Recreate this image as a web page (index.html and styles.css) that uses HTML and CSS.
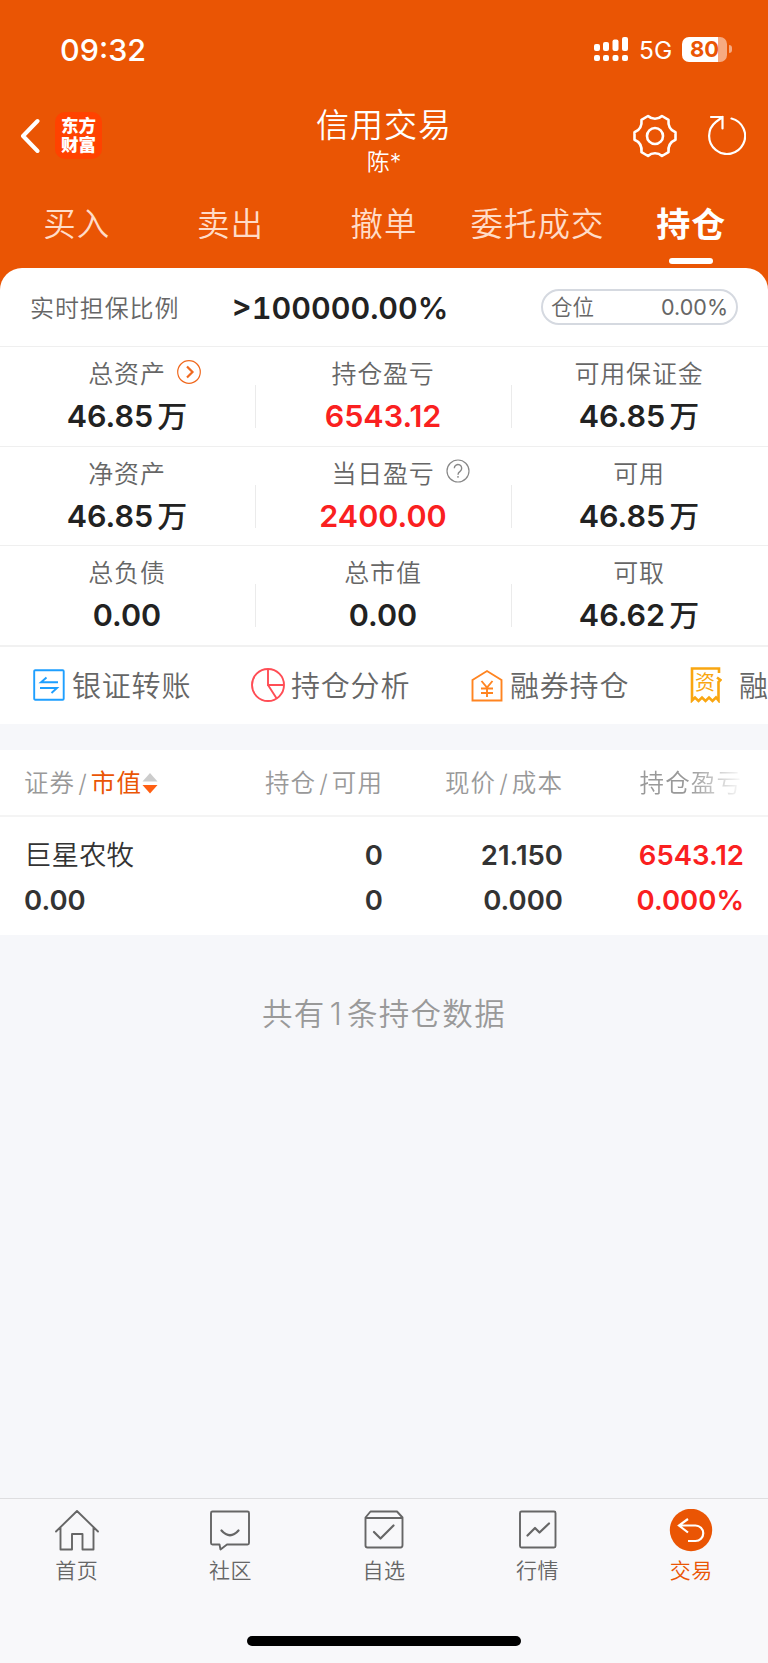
FILE: index.html
```
<!DOCTYPE html>
<html lang="zh-CN">
<head>
  <meta charset="UTF-8" />
  <meta name="viewport" content="width=device-width, initial-scale=1.0"/>
  <title>信用交易</title>
  <link rel="stylesheet" href="styles.css">
</head>
<body>

  <!-- 顶部 -->
  <header class="header">
    <div class="status-bar">
      <span class="time">09:32</span>
      <svg class="signal" width="35" height="26" viewBox="0 0 35 26" fill="#fff">
        <rect x="0" y="8" width="6" height="7" rx="2"/>
        <rect x="9" y="6" width="6" height="9" rx="2"/>
        <rect x="18.500" y="3.500" width="6" height="11.500" rx="2"/>
        <rect x="28" y="1" width="6" height="14" rx="2"/>
        <rect x="0" y="19" width="6" height="6" rx="2"/>
        <rect x="9" y="19" width="6" height="6" rx="2"/>
        <rect x="18.500" y="19" width="6" height="6" rx="2"/>
        <rect x="28" y="19" width="6" height="6" rx="2"/>
      </svg>
      <span class="network">5G</span>
      <span class="battery">80</span>
      <span class="battery-cap"></span>
    </div>

    <div class="nav-bar">
      <div class="nav-left">
        <svg width="20" height="36" viewBox="0 0 20 36" fill="none" stroke="#fff" stroke-width="4" stroke-linecap="round" stroke-linejoin="round">
          <path d="M17.500 3 3 18l14.500 15"/>
        </svg>
        <div class="logo">东方<br>财富</div>
      </div>
      <div class="nav-title">
        <h1>信用交易</h1>
        <p>陈*</p>
      </div>
      <div class="nav-right">
        <svg width="44" height="44" viewBox="0 0 44 44" fill="none" stroke="#fff" stroke-width="2.600" stroke-linejoin="round">
          <path d="M15 2Q18 4.800 22 4.800T29 2L35.500 5.800C34.800 12.500 37 16 42.500 18.300V25.700C37 28 34.800 31.500 35.500 38.200L29 42Q26 39.200 22 39.200T15 42L8.500 38.200C9.200 31.500 7 28 1.500 25.700V18.300C7 16 9.200 12.500 8.500 5.800Z"/>
          <circle cx="22" cy="22" r="8"/>
        </svg>
        <svg width="38" height="40" viewBox="0 0 38 40" fill="none" stroke="#fff" stroke-width="2.200" stroke-linecap="round">
          <path d="M23.500 3.500A18 18 0 1 1 8 6.800L14.500 2M3 2H14.500V13.500"/>
        </svg>
      </div>
    </div>

    <nav class="tabs">
      <span>买入</span>
      <span>卖出</span>
      <span>撤单</span>
      <span>委托成交</span>
      <span class="active">持仓</span>
    </nav>
  </header>

  <!-- 资产 -->
  <section class="assets">
    <div class="ratio">
      <span class="ratio-label">实时担保比例</span>
      <span class="ratio-value">&gt;100000.00%</span>
      <div class="position"><span>仓位</span><span class="position-value">0.00%</span></div>
    </div>

    <div class="asset-row">
      <div class="asset">
        <p class="label">总资产
          <svg class="mark" width="24" height="24" viewBox="0 0 24 24" fill="none" stroke="#f0691f">
            <circle cx="12" cy="12" r="11.300" stroke-width="1.200"/>
            <path d="M10 6.500 15.500 12 10 17.500" stroke-width="2.200"/>
          </svg>
        </p>
        <p class="value">46.85<i>万</i></p>
      </div>
      <div class="asset">
        <p class="label">持仓盈亏</p>
        <p class="value red">6543.12</p>
      </div>
      <div class="asset">
        <p class="label">可用保证金</p>
        <p class="value">46.85<i>万</i></p>
      </div>
    </div>

    <div class="asset-row">
      <div class="asset">
        <p class="label">净资产</p>
        <p class="value">46.85<i>万</i></p>
      </div>
      <div class="asset">
        <p class="label">当日盈亏
          <svg class="mark" width="24" height="24" viewBox="0 0 24 24" fill="none" stroke="#888" stroke-width="1.200">
            <circle cx="12" cy="12" r="11"/>
            <path d="M8.300 9.300a3.700 3.700 0 1 1 5.800 3c-1.400 1-2.100 1.600-2.100 3.400M12 17v1.700" stroke-width="1.400"/>
          </svg>
        </p>
        <p class="value red">2400.00</p>
      </div>
      <div class="asset">
        <p class="label">可用</p>
        <p class="value">46.85<i>万</i></p>
      </div>
    </div>

    <div class="asset-row">
      <div class="asset">
        <p class="label">总负债</p>
        <p class="value">0.00</p>
      </div>
      <div class="asset">
        <p class="label">总市值</p>
        <p class="value">0.00</p>
      </div>
      <div class="asset">
        <p class="label">可取</p>
        <p class="value">46.62<i>万</i></p>
      </div>
    </div>

    <!-- 快捷入口 -->
    <div class="shortcuts">
      <div class="shortcut">
        <svg width="32" height="32" viewBox="0 0 32 32" fill="none" stroke="#1e9fff" stroke-width="1.900">
          <rect x="1.200" y="1.200" width="29.500" height="29.500" rx="1"/>
          <path d="M13.500 8.500 8 13.300H25M7 19H24L18.500 24"/>
        </svg>
        <span>银证转账</span>
      </div>
      <div class="shortcut analysis">
        <svg width="34" height="34" viewBox="0 0 34 34" fill="none" stroke="#ff4d55" stroke-width="1.900">
          <circle cx="17" cy="17" r="16"/>
          <path d="M17 1V17H33M17 17l8.500 13.200"/>
        </svg>
        <span>持仓分析</span>
      </div>
      <div class="shortcut">
        <svg width="32" height="34" viewBox="0 0 32 34" fill="none" stroke="#ff8420" stroke-width="1.900">
          <path d="M1.500 12 16 3 30.500 12V32.500H1.500Z"/>
          <path d="M10.500 13 16 19.500 21.500 13M16 19.500V29M10 20.500H22M10 25H22"/>
        </svg>
        <span>融券持仓</span>
      </div>
      <div class="shortcut">
        <div class="bill">
          <svg width="32" height="36" viewBox="0 0 32 36" fill="none" stroke="#f9a611" stroke-width="2.600">
            <path d="M29 6V1.500H2V33.500L5 30.500 8.500 34 12 30.500 15.500 34 19 30.500 22.500 34 26 30.500 28.500 33.500V15L30.500 13 27 10.500"/>
          </svg>
          <span>资</span>
        </div>
        <span>融</span>
      </div>
    </div>
  </section>

  <!-- 持仓列表 -->
  <section class="holdings">
    <div class="row head">
      <div>证券<b>/</b><em>市值</em><svg class="sort" width="16" height="22" viewBox="0 0 16 22">
        <path d="M0.500 9.500 8 1l7.500 8.500Z" fill="#ccc"/>
        <path d="M0.500 13 8 21.500 15.500 13Z" fill="#ff5f12"/>
      </svg></div>
      <div>持仓<b>/</b>可用</div>
      <div>现价<b>/</b>成本</div>
      <div class="fade">持仓盈亏</div>
    </div>
    <div class="row stock">
      <div><span class="name">巨星农牧</span><span>0.00</span></div>
      <div><span>0</span><span>0</span></div>
      <div><span>21.150</span><span>0.000</span></div>
      <div class="red"><span>6543.12</span><span>0.000%</span></div>
    </div>
  </section>

  <p class="total">共有<span>1</span>条持仓数据</p>

  <!-- 底部导航 -->
  <footer class="tab-bar">
    <div class="tab-items">
      <div class="tab-item">
        <svg width="44" height="44" viewBox="0 0 44 44" fill="none" stroke="#666" stroke-width="1.900" stroke-linejoin="round" stroke-linecap="round">
          <path d="M1 22.500 22 2 43 22.500M5.500 18.500V40.500H17V25H27.500V40.500H38.500V18.500"/>
        </svg>
        <span>首页</span>
      </div>
      <div class="tab-item">
        <svg width="44" height="44" viewBox="0 0 44 44" fill="none" stroke="#666" stroke-width="1.900" stroke-linejoin="round" stroke-linecap="round">
          <path d="M4.500 2.500H39.500Q41 2.500 41 4V34Q41 35.500 39.500 35.500H19L12.500 40.500 11.500 35.500H4.500Q3 35.500 3 34V4Q3 2.500 4.500 2.500Z"/>
          <path d="M13.500 21.500Q22 31 30.500 21.500" stroke-width="2.300"/>
        </svg>
        <span>社区</span>
      </div>
      <div class="tab-item">
        <svg width="44" height="44" viewBox="0 0 44 44" fill="none" stroke="#666" stroke-width="1.900" stroke-linejoin="round" stroke-linecap="round">
          <path d="M3.500 8.500 8.500 2.500H35L40.500 8.500V36Q40.500 38.500 38.500 38.500H5.500Q3.500 38.500 3.500 36.500ZM4 9H40"/>
          <path d="M12 23 18.500 29.500 31.500 16.500" stroke-width="2.200"/>
        </svg>
        <span>自选</span>
      </div>
      <div class="tab-item">
        <svg width="44" height="44" viewBox="0 0 44 44" fill="none" stroke="#666" stroke-width="1.900" stroke-linejoin="round" stroke-linecap="round">
          <rect x="4" y="2.500" width="35.500" height="36" rx="1.500"/>
          <path d="M11.500 26.500 19 19 23.500 23.500 33 14.500" stroke-width="2.200"/>
        </svg>
        <span>行情</span>
      </div>
      <div class="tab-item active">
        <svg width="44" height="44" viewBox="0 0 44 44" fill="none" stroke="#fff" stroke-width="2.200">
          <circle cx="22" cy="21" r="21.200" fill="#ea5504" stroke="none"/>
          <path d="M19 10 10 16.500 19 23.500M10.500 16.500H26.500A7.500 7.500 0 0 1 26.500 32H19"/>
        </svg>
        <span>交易</span>
      </div>
    </div>
    <div class="home-bar"></div>
  </footer>

</body>
</html>
```
FILE: styles.css
```
* {
  box-sizing: border-box;
}

body {
  margin: 0;
  min-height: 1663px;
  display: flex;
  flex-direction: column;
  font-family: Inter, "Noto Sans CJK SC", sans-serif;
  font-weight: 350;
  color: #666;
  background: #f6f7fa;
}

h1, p {
  margin: 0;
  font-weight: 350;
}

svg {
  display: block;
  flex: none;
}

.header {
  height: 290px;
  background: #ea5504;
  color: #fff;
}

.status-bar {
  height: 98px;
  padding: 0 36px 0 60px;
  display: flex;
  align-items: center;
}

.time {
  flex: 1;
  font-size: 30.500px;
  font-weight: 550;
}

.network {
  margin: 2px 0 0 10px;
  width: 32px;
  font-size: 24.500px;
  font-weight: 400;
}

.battery {
  width: 45px;
  height: 25px;
  margin-left: 11px;
  border-radius: 7px;
  background: linear-gradient(to right, #fff 80%, #f6aa82 80%);
  color: #ea5504;
  font-size: 22px;
  font-weight: 700;
  line-height: 25px;
  text-align: center;
}

.battery-cap {
  width: 3px;
  height: 8px;
  margin-left: 2px;
  border-radius: 0 4px 4px 0;
  background: #f6aa82;
}

.nav-bar {
  height: 86px;
  padding: 0 22px 0 20px;
  display: grid;
  grid-template-columns: 1fr auto 1fr;
}

.nav-left {
  display: flex;
  align-items: flex-start;
  gap: 15px;
  padding-top: 14px;
}

.nav-left svg {
  margin-top: 6px;
}

.logo {
  width: 47px;
  height: 47px;
  padding-top: 4px;
  border-radius: 10px;
  background: #ff4200;
  font-size: 17.500px;
  font-weight: 900;
  line-height: 19px;
  text-align: center;
}

.nav-title {
  padding: 1px 0 0 2px;
  text-align: center;
}

.nav-title h1 {
  font-size: 33px;
  line-height: 52px;
  letter-spacing: 1px;
}

.nav-title p {
  font-size: 23px;
  line-height: 22px;
}

.nav-right {
  display: flex;
  justify-content: flex-end;
  gap: 31px;
  padding-top: 16px;
}

.nav-right svg + svg {
  margin-top: 1px;
}

.tabs {
  display: grid;
  grid-template-columns: repeat(5, 1fr);
  line-height: 82px;
  font-size: 32.500px;
  letter-spacing: 1px;
  text-align: center;
  color: #ffdcc8;
}

.tabs .active {
  position: relative;
  color: #fff;
  font-size: 34px;
  font-weight: 700;
}

.tabs .active::after {
  content: "";
  position: absolute;
  left: 55px;
  top: 74px;
  width: 44px;
  height: 6px;
  border-radius: 3px;
  background: #fff;
}

.assets {
  margin-top: -22px;
  height: 456px;
  border-radius: 22px 22px 0 0;
  background: #fff;
  overflow: hidden;
}

.ratio {
  height: 78px;
  padding: 0 30px;
  display: flex;
  align-items: center;
}

.ratio-label {
  width: 202px;
  margin-top: -2px;
  font-size: 24px;
  letter-spacing: 0.900px;
}

.ratio-value {
  flex: 1;
  font-size: 30.500px;
  font-weight: 600;
  font-variant-numeric: tabular-nums;
  color: #222;
}

.position {
  width: 197px;
  height: 36px;
  padding: 0 8px;
  border: 2px solid #d5d9e0;
  border-radius: 18px;
  display: flex;
  align-items: center;
  justify-content: space-between;
  font-size: 21.500px;
  line-height: 30px;
}

.position span {
  margin-top: -1px;
}

.position .position-value {
  font-weight: 400;
}

.asset-row {
  height: 99.500px;
  border-top: 1px solid #efefef;
  display: grid;
  grid-template-columns: repeat(3, 1fr);
}

.asset {
  position: relative;
  padding-top: 7px;
  text-align: center;
}

.asset + .asset::before {
  content: "";
  position: absolute;
  left: -1px;
  top: 38px;
  width: 1px;
  height: 43px;
  background: #ebebeb;
}

.label {
  padding-right: 2px;
  font-size: 25px;
  line-height: 40px;
  letter-spacing: 0.8px;
  display: flex;
  justify-content: center;
  position: relative;
}

.mark {
  position: absolute;
  top: 6px;
  left: 177px;
}

.asset:nth-child(2) .mark {
  top: 5px;
  left: 190px;
}

.value {
  padding-right: 2px;
  font-size: 30.500px;
  font-weight: 600;
  line-height: 44px;
  color: #222;
}

.value i {
  margin-left: 4px;
  font-size: 30px;
  font-style: normal;
  font-weight: 500;
}

.value.red,
.red {
  color: #fa2020;
}

.shortcuts {
  height: 80px;
  padding: 0 0 1px 33px;
  border-top: 2px solid #f1f1f1;
  display: flex;
  align-items: center;
  font-size: 29px;
  letter-spacing: 0.8px;
  white-space: nowrap;
}

.shortcut {
  flex: none;
  width: 219px;
  display: flex;
  align-items: center;
  gap: 7px;
}

.shortcut.analysis {
  width: 220px;
  margin-left: -1px;
  gap: 6px;
}

.shortcut > span {
  margin-top: -2px;
}

.bill {
  position: relative;
  margin-right: 10px;
}

.bill span {
  position: absolute;
  left: 5px;
  top: 5px;
  font-size: 20px;
  font-weight: 400;
  line-height: 22px;
  letter-spacing: 0;
  color: #f9a611;
}

.holdings {
  margin-top: 26px;
  background: #fff;
}

.row {
  padding: 0 24px;
  display: grid;
  grid-template-columns: 179px 180px 180px 181px;
  text-align: right;
}

.row > div:first-child {
  text-align: left;
}

.head {
  height: 67px;
  border-bottom: 2px solid #f4f4f4;
  font-size: 24.500px;
  line-height: 66px;
  letter-spacing: 1.100px;
  color: #999;
}

.head b {
  margin: 0 3px;
  font-weight: 350;
}

.head em {
  font-style: normal;
  font-weight: 400;
  color: #ea5504;
}

.head > div:first-child {
  display: flex;
  align-items: center;
}

.head .fade {
  padding-right: 2px;
}

.fade {
  -webkit-mask-image: linear-gradient(to right, #000 70%, transparent 100%);
  mask-image: linear-gradient(to right, #000 70%, transparent 100%);
}

.stock {
  height: 118px;
  padding-top: 16px;
  font-size: 27.500px;
  font-weight: 600;
  line-height: 45px;
  color: #333;
}

.stock span {
  display: block;
}

.stock .red {
  color: #fa2020;
}

.stock .name {
  font-weight: 350;
}

.total {
  margin-top: 56px;
  font-size: 30.500px;
  line-height: 46px;
  letter-spacing: 1.300px;
  text-align: center;
  color: #999;
}

.total span {
  margin: 0 4px;
}

.tab-bar {
  margin-top: auto;
  height: 165px;
  border-top: 1px solid #dedee0;
  background: #f8f8fa;
}

.tab-items {
  padding-top: 10px;
  display: grid;
  grid-template-columns: repeat(5, 1fr);
}

.tab-item {
  display: flex;
  flex-direction: column;
  align-items: center;
  font-size: 21px;
  line-height: 36px;
  letter-spacing: 0.5px;
}

.tab-item.active {
  color: #ea5504;
}

.home-bar {
  width: 274px;
  height: 10px;
  margin: 47px auto 0;
  border-radius: 5px;
  background: #000;
}
```
